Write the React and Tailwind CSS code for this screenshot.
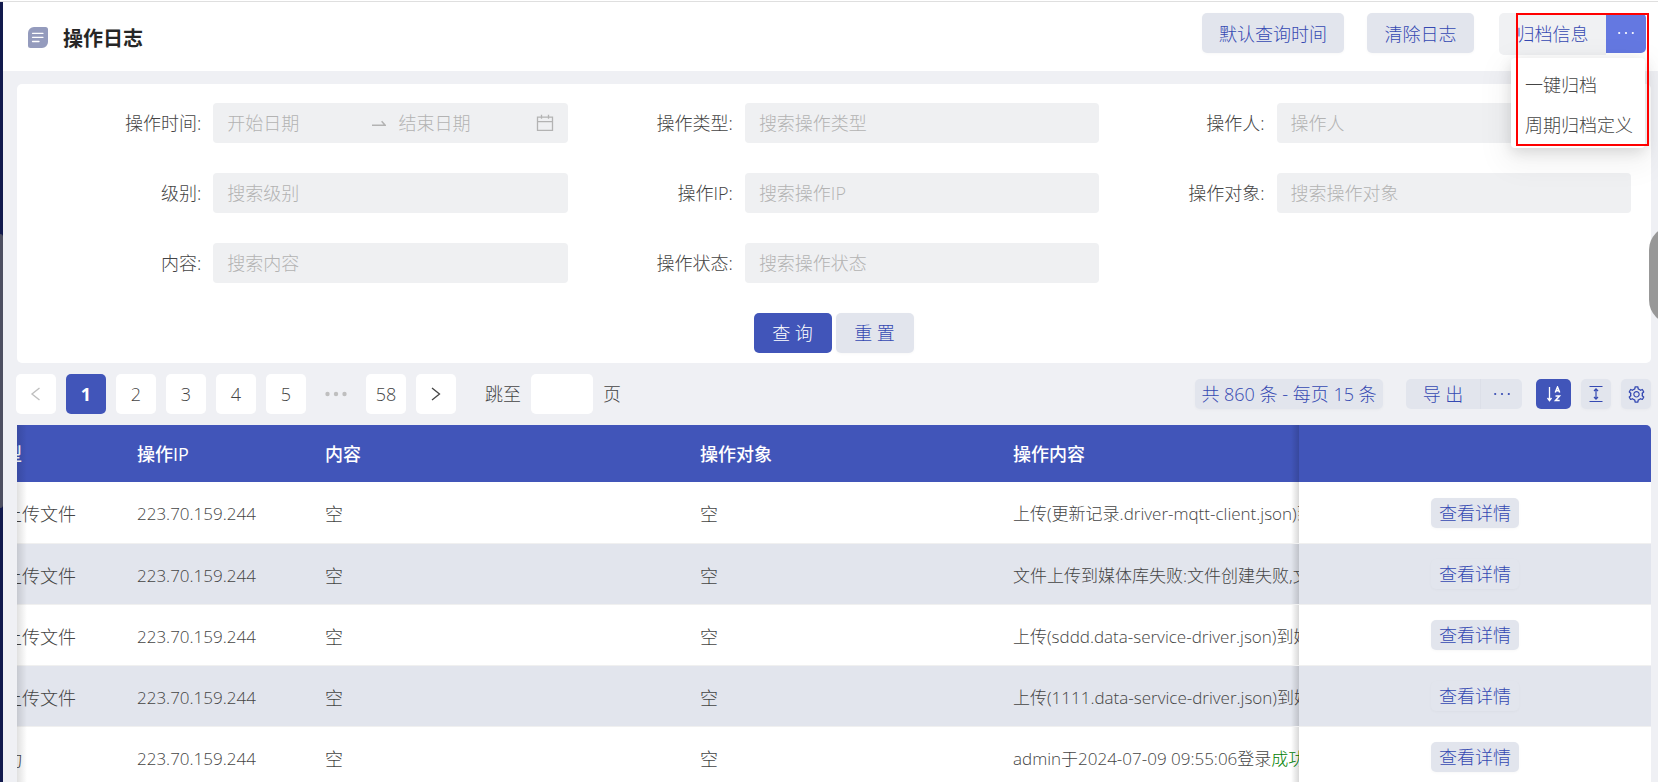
const field = "h-10 w-full min-w-0 rounded-[4px] bg-[#eff0f2] px-[14px] text-[18px] text-[#666] placeholder:text-[#b3b3b3] outline-none";
const softBtn = "rounded-[5px] bg-[#e2e5ed] text-[#3549b2] shadow-[0_1px_3px_rgba(0,0,0,0.03)]";
const pageBtn = "flex h-10 w-10 items-center justify-center rounded-[5px]";

function Field({ id, label, placeholder }) {
  return (
    <div className="grid grid-cols-[1fr_2fr] items-center">
      <label htmlFor={id} className="pr-3 text-right">{label}:</label>
      <input id={id} placeholder={placeholder} className={field} />
    </div>
  );
}

function DateRange() {
  return (
    <div className="grid grid-cols-[1fr_2fr] items-center">
      <label htmlFor="start" className="pr-3 text-right">操作时间:</label>
      <div className="flex h-10 min-w-0 items-center rounded-[4px] bg-[#eff0f2] px-[14px]">
        <input id="start" placeholder="开始日期" className="w-0 flex-1 outline-none placeholder:text-[#b3b3b3]" />
        <svg className="mx-3 h-[14px] w-[14px] shrink-0" viewBox="0 0 16 16" fill="none" stroke="#b3b3b3" strokeWidth="1.7">
          <path d="M0 10.5H15L11 6" />
        </svg>
        <input aria-label="结束日期" placeholder="结束日期" className="w-0 flex-1 outline-none placeholder:text-[#b3b3b3]" />
        <svg className="ml-1 h-[18px] w-[18px] shrink-0" viewBox="0 0 18 18" fill="none" stroke="#b3b3b3" strokeWidth="1.3">
          <path d="M1.5 3.2h15v13.2h-15zM1.5 7.6h15M5.5 0.8v4M12.5 0.8v4" />
        </svg>
      </div>
    </div>
  );
}

function Dots() {
  return (
    <svg className="h-4 w-4" viewBox="0 0 16 16" fill="currentColor">
      <circle cx="1.2" cy="8" r="1.1" />
      <circle cx="8" cy="8" r="1.1" />
      <circle cx="14.8" cy="8" r="1.1" />
    </svg>
  );
}

function Header() {
  return (
    <header className="flex h-[69px] items-start justify-between bg-white pt-[11px] pr-3 pl-[25px]">
      <div className="flex items-center gap-[15px] pt-2">
        <svg className="h-[21px] w-5" viewBox="0 0 20 21">
          <path d="M6 0H17.5A2.5 2.5 0 0 1 20 2.500V15A6 6 0 0 1 14 21H2.500A2.500 2.500 0 0 1 0 18.500V6A6 6 0 0 1 6 0Z" fill="#949bbd" />
          <path d="M4.500 6.300H15M4.500 10.300H15M4.500 14.500H11" stroke="#fff" strokeWidth="1.3" strokeLinecap="round" />
        </svg>
        <h1 className="pt-1 text-[20px] leading-7 font-bold text-[#262626]">操作日志</h1>
      </div>
      <div className="flex">
        <button className={`mr-[23px] h-10 w-[142px] pt-px ${softBtn}`}>默认查询时间</button>
        <button className={`mr-[25px] h-10 w-[107px] pt-px ${softBtn}`}>清除日志</button>
        <div className="relative flex">
          <button className="h-[42px] w-[107px] rounded-l-[5px] bg-[#f0f1f3] text-[#3549b2]">归档信息</button>
          <button aria-label="更多" className="flex h-10 w-10 items-center justify-center rounded-r-[5px] bg-[#6478e1] text-white">
            <Dots />
          </button>
          <ul className="absolute top-[45px] right-px z-10 w-[134px] rounded-[4px] bg-white pt-[7px] pb-[3px] shadow-[0_4px_14px_rgba(0,0,0,0.12),0_10px_30px_8px_rgba(0,0,0,0.05)]">
            {["一键归档", "周期归档定义"].map((t) => (
              <li key={t}>
                <button className="h-10 w-full pl-[14px] text-left whitespace-nowrap">{t}</button>
              </li>
            ))}
          </ul>
          <div className="pointer-events-none absolute top-0 -right-[3px] z-20 h-[133px] w-[133px] border-2 border-[#f00]" />
        </div>
      </div>
    </header>
  );
}

function SearchForm() {
  return (
    <form className="rounded-[5px] bg-white pt-[19px] pr-5 pb-[10px] pl-[19px]">
      <div className="grid grid-cols-3 gap-y-[30px]">
        <DateRange />
        <Field id="type" label="操作类型" placeholder="搜索操作类型" />
        <Field id="user" label="操作人" placeholder="操作人" />
        <Field id="level" label="级别" placeholder="搜索级别" />
        <Field id="ip" label="操作IP" placeholder="搜索操作IP" />
        <Field id="target" label="操作对象" placeholder="搜索操作对象" />
        <Field id="content" label="内容" placeholder="搜索内容" />
        <Field id="status" label="操作状态" placeholder="搜索操作状态" />
      </div>
      <div className="mt-[30px] flex justify-center gap-1">
        <button type="button" className="h-10 w-[78px] rounded-[5px] bg-[#4155b9] text-white">查 询</button>
        <button type="button" className={`h-10 w-[78px] ${softBtn}`}>重 置</button>
      </div>
    </form>
  );
}

function Toolbar() {
  return (
    <div className="flex h-[62px] items-center justify-between">
      <nav className="-ml-px flex items-center gap-[10px]">
        <button aria-label="上一页" className={`${pageBtn} bg-white text-[#bfbfbf]`}>
          <svg className="h-4 w-4" viewBox="0 0 16 16" fill="none" stroke="currentColor" strokeWidth="1.4"><path d="M11.500 2 4 8l7.500 6" /></svg>
        </button>
        <button className={`${pageBtn} bg-[#4155b9] font-bold text-white`}>1</button>
        {[2, 3, 4, 5].map((n) => (
          <button key={n} className={`${pageBtn} bg-white`}>{n}</button>
        ))}
        <span className={`${pageBtn} text-[#bfbfbf]`}>
          <svg className="h-6 w-6" viewBox="0 0 24 24" fill="currentColor">
            <circle cx="3.500" cy="12" r="2.200" />
            <circle cx="12" cy="12" r="2.200" />
            <circle cx="20.500" cy="12" r="2.200" />
          </svg>
        </span>
        <button className={`${pageBtn} bg-white`}>58</button>
        <button aria-label="下一页" className={`${pageBtn} bg-white`}>
          <svg className="h-4 w-4" viewBox="0 0 16 16" fill="none" stroke="currentColor" strokeWidth="1.3"><path d="M4 2 11.500 8 4 14" /></svg>
        </button>
        <label htmlFor="jump" className="ml-[19px]">跳至</label>
        <input id="jump" className="h-10 w-[62px] rounded-[5px] bg-white px-2 outline-none" />
        <span>页</span>
      </nav>
      <div className="flex items-center text-[#3549b2]">
        <button className={`mr-[23px] h-[30px] w-[188px] ${softBtn}`}>共 860 条 - 每页 15 条</button>
        <button className="h-[30px] w-[75px] rounded-l-[5px] border-r border-[#dcdfe8] bg-[#e2e5ed]">导 出</button>
        <button aria-label="更多导出" className="mr-[14px] flex h-[30px] w-[41px] items-center justify-center rounded-r-[5px] bg-[#e2e5ed]">
          <Dots />
        </button>
        <button aria-label="排序" className="mr-[10px] flex h-[30px] w-[35px] items-center justify-center rounded-[5px] bg-[#4155b9]">
          <svg className="h-4 w-4" viewBox="0 0 16 16" fill="none" stroke="#fff">
            <path d="M3.500 1V14.500M1.500 12l2 2.700 2-2.700" strokeWidth="1.3" />
            <path d="M9.300 6.500 11.500 1 13.700 6.500M10 4.800h3M9.500 10h4L9.500 14.500h4.200" strokeWidth="1.500" />
          </svg>
        </button>
        <button aria-label="密度" className={`mr-[10px] flex h-[30px] w-[30px] items-center justify-center ${softBtn}`}>
          <svg className="h-[18px] w-[18px]" viewBox="0 0 18 18" fill="none" stroke="currentColor" strokeWidth="1.2">
            <path d="M2.500 1.500h13M2.500 16.500h13M9 4v10M7 6l2-2.200L11 6M7 12l2 2.200L11 12" />
          </svg>
        </button>
        <button aria-label="设置" className={`flex h-[30px] w-[30px] items-center justify-center ${softBtn}`}>
          <svg className="h-[19px] w-[19px]" viewBox="0 0 1024 1024" fill="currentColor">
            <path d="M924.800 625.700l-65.500-56c3.100-19 4.700-38.400 4.700-57.800s-1.600-38.800-4.700-57.800l65.500-56a32.030 32.030 0 0 0 9.300-35.200l-.9-2.600a443.740 443.740 0 0 0-79.700-137.900l-1.800-2.100a32.120 32.120 0 0 0-35.100-9.500l-81.300 28.900c-30-24.600-63.500-44-99.700-57.600l-15.700-85a32.050 32.050 0 0 0-25.800-25.700l-2.700-.5c-52.100-9.400-106.900-9.400-159 0l-2.700.5a32.050 32.050 0 0 0-25.800 25.700l-15.800 85.400a351.860 351.860 0 0 0-99 57.400l-81.900-29.100a32 32 0 0 0-35.100 9.500l-1.800 2.100a446.020 446.020 0 0 0-79.700 137.900l-.9 2.600c-4.500 12.500-.8 26.500 9.300 35.200l66.300 56.600c-3.100 18.800-4.600 38-4.600 57.100 0 19.200 1.500 38.400 4.600 57.100L99 625.500a32.030 32.030 0 0 0-9.300 35.200l.9 2.600c18.100 50.400 44.900 96.900 79.700 137.900l1.800 2.100a32.120 32.120 0 0 0 35.100 9.500l81.900-29.100c29.800 24.500 63.100 43.900 99 57.400l15.800 85.400a32.050 32.050 0 0 0 25.800 25.700l2.700.5a449.400 449.400 0 0 0 159 0l2.700-.5a32.050 32.050 0 0 0 25.800-25.700l15.700-85a350 350 0 0 0 99.700-57.600l81.300 28.900a32 32 0 0 0 35.100-9.500l1.800-2.100c34.800-41.100 61.600-87.500 79.700-137.900l.9-2.600c4.500-12.300.8-26.300-9.300-35zM788.300 465.900c2.500 15.100 3.800 30.600 3.800 46.100s-1.300 31-3.800 46.100l-6.600 40.100 74.700 63.900a370.030 370.030 0 0 1-42.600 73.600L721 702.800l-31.400 25.800c-23.900 19.600-50.500 35-79.300 45.800l-38.100 14.300-17.900 97a377.500 377.500 0 0 1-85 0l-17.900-97.200-37.800-14.500c-28.500-10.800-55-26.200-78.700-45.700l-31.400-25.900-93.400 33.200c-17-22.900-31.200-47.600-42.600-73.600l75.500-64.500-6.500-40c-2.400-14.900-3.700-30.300-3.700-45.500 0-15.300 1.200-30.600 3.700-45.500l6.500-40-75.500-64.500c11.300-26.100 25.600-50.700 42.600-73.600l93.400 33.200 31.400-25.900c23.700-19.500 50.200-34.900 78.700-45.700l37.900-14.300 17.900-97.200c28.100-3.200 56.800-3.200 85 0l17.900 97 38.100 14.300c28.700 10.800 55.400 26.200 79.300 45.800l31.400 25.800 92.800-32.900c17 22.900 31.200 47.600 42.600 73.600L781.800 426l6.500 39.900zM512 326c-97.200 0-176 78.800-176 176s78.800 176 176 176 176-78.800 176-176-78.800-176-176-176zm79.200 255.200A111.600 111.600 0 0 1 512 614c-29.900 0-58-11.700-79.200-32.800A111.600 111.600 0 0 1 400 502c0-29.900 11.700-58 32.800-79.200C454 401.600 482.100 390 512 390c29.900 0 58 11.600 79.200 32.800A111.600 111.600 0 0 1 624 502c0 29.900-11.700 58-32.800 79.200z" />
          </svg>
        </button>
      </div>
    </div>
  );
}

const rows = [
  { type: "媒体库上传文件", content: "上传(更新记录.driver-mqtt-client.json)到媒体库" },
  { type: "媒体库上传文件", content: "文件上传到媒体库失败:文件创建失败,文件已存在" },
  { type: "媒体库上传文件", content: "上传(sddd.data-service-driver.json)到媒体库" },
  { type: "媒体库上传文件", content: "上传(1111.data-service-driver.json)到媒体库" },
  { type: "登录成功", content: "admin于2024-07-09 09:55:06登录", result: "成功" },
];

function LogTable() {
  const head = "overflow-hidden px-[10px] whitespace-nowrap";
  const cell = "overflow-hidden px-[10px] pt-1 whitespace-nowrap";
  const pinned = "relative before:absolute before:inset-y-0 before:right-full before:w-2 before:bg-linear-to-r before:from-transparent before:to-black/15";
  return (
    <div className="relative overflow-hidden rounded-tr-[5px]">
      {/* table is scrolled sideways, so the first column is partly cut off */}
      <table className="-ml-[77px] w-[calc(100%+77px)] table-fixed border-collapse text-left">
        <colgroup>
          <col className="w-[187px]" />
          <col className="w-[188px]" />
          <col className="w-[375px]" />
          <col className="w-[313px]" />
          <col />
          <col className="w-[352px]" />
        </colgroup>
        <thead>
          <tr className="h-[57px] bg-[#4155b9] text-[18px] text-white">
            {["操作类型", "操作IP", "内容", "操作对象", "操作内容"].map((h) => (
              <th key={h} className={`${head} font-medium`}>{h}</th>
            ))}
            <th className={pinned} aria-label="操作" />
          </tr>
        </thead>
        <tbody className="text-[17px]">
          {rows.map((r, i) => (
            <tr key={i} className="h-[61px] border-b border-[#f0f0f0] bg-white even:bg-[#e2e5ed]">
              <td className={`${cell} text-[18px]`}>{r.type}</td>
              <td className={cell}>223.70.159.244</td>
              <td className={`${cell} text-[18px]`}>空</td>
              <td className={`${cell} text-[18px]`}>空</td>
              <td className={cell}>
                {r.content}
                {r.result && <span className="text-[#008000]">{r.result}</span>}
              </td>
              <td className={`${pinned} pt-px text-center`}>
                <button className={`h-[30px] w-[88px] align-middle text-[18px] ${softBtn}`}>查看详情</button>
              </td>
            </tr>
          ))}
        </tbody>
      </table>
      <div className="pointer-events-none absolute inset-y-0 left-0 w-[10px] bg-linear-to-r from-black/12 to-transparent" />
    </div>
  );
}

export default function App() {
  return (
    <div className="relative flex h-screen flex-col overflow-hidden bg-white font-['Open_Sans','Noto_Sans_CJK_SC',sans-serif] text-[18px] leading-6 font-light text-[#444]">
      <div className="mt-px h-px shrink-0 bg-[#dfdfdf]" />
      <div className="flex min-h-0 flex-1">
        <aside className="w-[3px] shrink-0 bg-[#121a4d] pt-[232px]">
          <div className="h-[274px] rounded-tr-[3px] rounded-br-[3px] bg-[#4d4f61]" />
        </aside>
        <main className="min-w-0 flex-1 overflow-hidden bg-[#eff0f4]">
          <Header />
          <div className="pt-[13px] pr-[7px] pl-[14px]">
            <SearchForm />
            <Toolbar />
            <LogTable />
          </div>
        </main>
      </div>
      <div className="absolute top-[226px] -right-[41px] h-[98px] w-[50px] rounded-[24px] bg-[#989898]" />
    </div>
  );
}
